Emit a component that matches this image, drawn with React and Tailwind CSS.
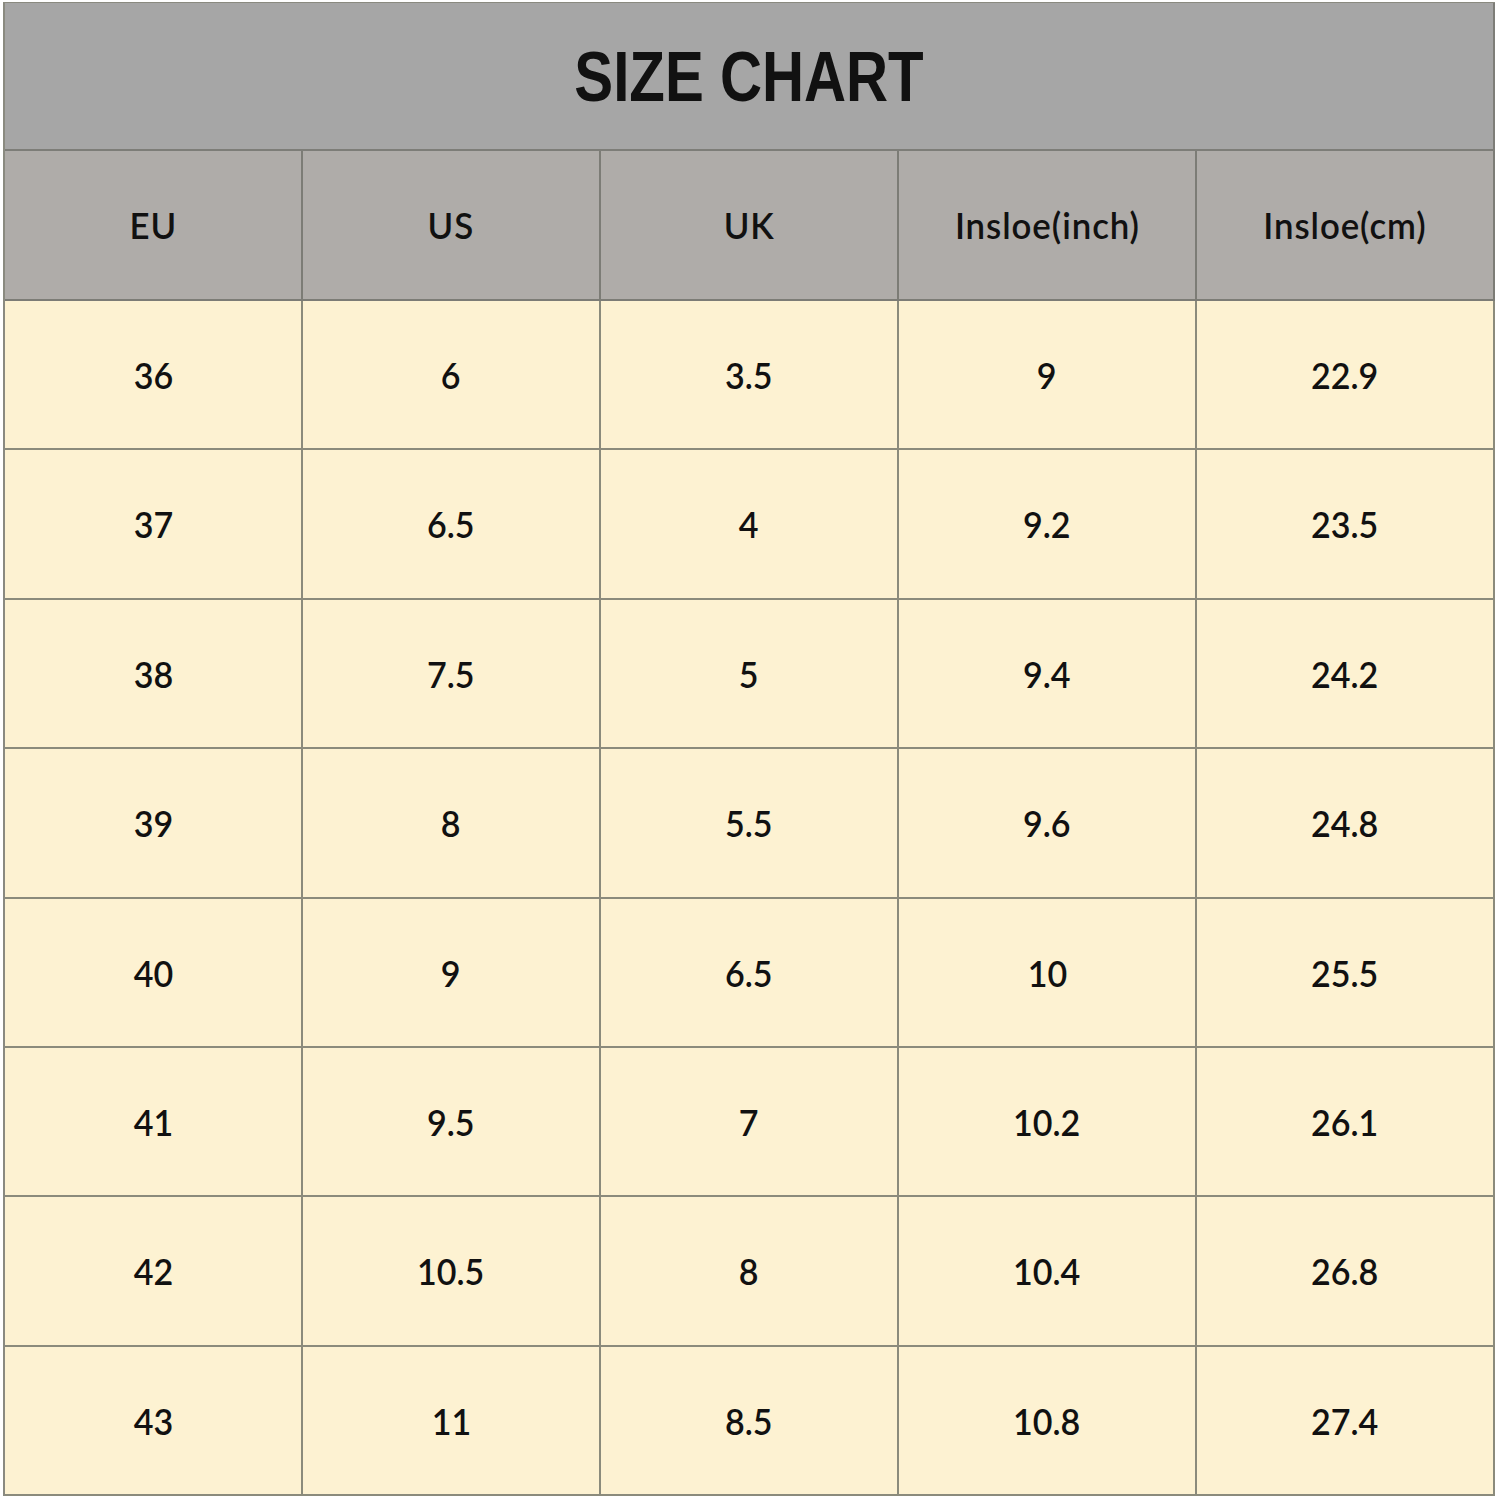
import React from 'react';

const headers = ['EU', 'US', 'UK', 'Insloe(inch)', 'Insloe(cm)'];

const rows = [
    ['36', '6', '3.5', '9', '22.9'],
    ['37', '6.5', '4', '9.2', '23.5'],
    ['38', '7.5', '5', '9.4', '24.2'],
    ['39', '8', '5.5', '9.6', '24.8'],
    ['40', '9', '6.5', '10', '25.5'],
    ['41', '9.5', '7', '10.2', '26.1'],
    ['42', '10.5', '8', '10.4', '26.8'],
    ['43', '11', '8.5', '10.8', '27.4'],
];

const cellFont = { fontFamily: 'Lato, "Open Sans", sans-serif' };

export default function App() {
    return (
        <div className="w-[1500px] h-[1500px] bg-white pt-[2px] pl-[3px]">
            <div className="w-[1492px] border-l-2 border-t border-[#8a8a80]">
                {/* Title bar */}
                <div className="h-[148px] bg-[#a6a6a6] border-b-2 border-r-2 border-[#7d7d78] flex items-center justify-center">
                    <span
                        className="text-[71px] font-bold text-[#111] scale-x-[0.82] leading-none"
                        style={{ fontFamily: '"Liberation Sans", Arial, sans-serif' }}
                    >
                        SIZE CHART
                    </span>
                </div>

                {/* Header row */}
                <div className="grid grid-cols-5 h-[150px] bg-[#afaca9]">
                    {headers.map((h) => (
                        <div
                            key={h}
                            className="flex items-center justify-center border-r-2 border-b-2 border-[#7c7c76]"
                        >
                            <span
                                className="text-[37px] text-[#111] scale-x-[0.94] tracking-[1px] font-semibold"
                                style={cellFont}
                            >
                                {h}
                            </span>
                        </div>
                    ))}
                </div>

                {/* Data rows */}
                {rows.map((r, i) => (
                    <div key={i} className="grid grid-cols-5 h-[149.4px] bg-[#fdf2d2]">
                        {r.map((v, j) => (
                            <div
                                key={j}
                                className="flex items-center justify-center border-r-2 border-b-2 border-[#8b8b7c]"
                            >
                                <span
                                    className="text-[37px] text-[#111] scale-x-[0.92] font-semibold"
                                    style={cellFont}
                                >
                                    {v}
                                </span>
                            </div>
                        ))}
                    </div>
                ))}
            </div>
        </div>
    );
}
